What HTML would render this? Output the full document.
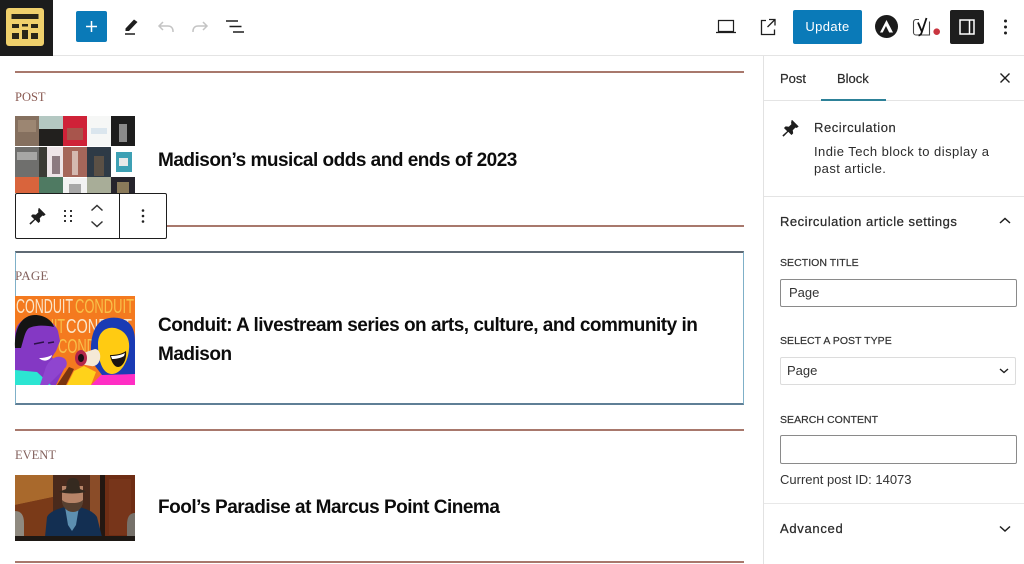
<!DOCTYPE html>
<html lang="en">
<head>
<meta charset="utf-8">
<title>Recirculation block editor</title>
<style>
html,body{margin:0;padding:0;background:#fff}
body{width:1024px;height:564px;position:relative;overflow:hidden;font-family:"Liberation Sans",sans-serif;color:#1e1e1e}
.a{position:absolute}
.t{position:absolute;white-space:nowrap}
.rule{position:absolute;left:15px;width:729px;height:2px;background:#a8786c}
.kick{position:absolute;left:15px;font:13px/16px "Liberation Serif",serif;color:#8a5a52;white-space:nowrap}
.title{position:absolute;left:158px;font:bold 19px/29px "Liberation Sans",sans-serif;letter-spacing:-.5px;color:#0c0c0c;white-space:nowrap}
.side{font-size:13px;line-height:17px;color:#2b2b2b}
.lab{position:absolute;left:780px;font-size:10.5px;line-height:13px;letter-spacing:.05px;color:#333;white-space:nowrap;-webkit-text-stroke:.2px #333}
.box{position:absolute;left:780px;width:235px;background:#fff;border:1px solid #8a8a8a;border-radius:2px}
svg{position:absolute;display:block;overflow:visible}
</style>
</head>
<body>

<!-- Top bar -->
<div class="a" style="left:0;top:0;width:1024px;height:55px;border-bottom:1px solid #e4e4e4;box-sizing:content-box"></div>
<div class="a" style="left:0;top:0;width:53px;height:56px;background:#1c1c1c"></div>
<svg style="left:6px;top:8px" width="38" height="38" viewBox="0 0 38 38">
  <rect width="38" height="38" rx="3" fill="#f0d06c"/>
  <rect x="5.500" y="6" width="27" height="5" fill="#2a2618"/>
  <rect x="6" y="16" width="7" height="4" fill="#2a2618"/>
  <rect x="16" y="16" width="6" height="2.500" fill="#2a2618"/>
  <rect x="25" y="16" width="7" height="4" fill="#2a2618"/>
  <rect x="6" y="25" width="7" height="6" fill="#2a2618"/>
  <rect x="16" y="22" width="6" height="9" fill="#2a2618"/>
  <rect x="25" y="25" width="7" height="6" fill="#2a2618"/>
</svg>

<div class="a" style="left:76px;top:11px;width:31px;height:31px;background:#0a7ab8;border-radius:2px"></div>
<svg style="left:76px;top:11px" width="31" height="31" viewBox="0 0 31 31"><path d="M15.500 10v11M10 15.500h11" stroke="#fff" stroke-width="1.500" fill="none"/></svg>

<svg style="left:122px;top:17px" width="20" height="20" viewBox="0 0 20 20"><path d="M3.500 11.500 12 2.500l3.500 2.500-8.500 9H3.500z" fill="#1e1e1e"/><path d="M3 17h10" stroke="#1e1e1e" stroke-width="1.500"/></svg>
<svg style="left:156px;top:17px" width="20" height="20" viewBox="0 0 20 20"><path d="M7 5 3 9l4 4M3 9h9c3 0 5 2 5 5v1" stroke="#c4c4c4" stroke-width="1.500" fill="none"/></svg>
<svg style="left:190px;top:17px" width="20" height="20" viewBox="0 0 20 20"><path d="M13 5l4 4-4 4M17 9H8c-3 0-5 2-5 5v1" stroke="#c4c4c4" stroke-width="1.500" fill="none"/></svg>
<svg style="left:224px;top:17px" width="22" height="20" viewBox="0 0 22 20"><path d="M2 4h12M5.500 9.500h12M9 15h11" stroke="#1e1e1e" stroke-width="1.600" fill="none"/></svg>

<svg style="left:716px;top:17px" width="20" height="20" viewBox="0 0 20 20"><path d="M2.500 3.500h15v11h-15zM0 15.500h20" stroke="#1e1e1e" stroke-width="1.200" fill="none"/></svg>
<svg style="left:758px;top:17px" width="20" height="20" viewBox="0 0 20 20"><path d="M8 3.500H3.500v14h13v-5M11 2.500h6v6M17 2.500l-7.500 7.500" stroke="#1e1e1e" stroke-width="1.300" fill="none"/></svg>

<div class="a" style="left:793px;top:10px;width:69px;height:34px;background:#0a7ab8;border-radius:2px;color:#fff;font-size:13px;line-height:34px;text-align:center;letter-spacing:.4px">Update</div>

<svg style="left:875px;top:15px" width="23" height="23" viewBox="0 0 23 23"><circle cx="11.500" cy="11.500" r="11.500" fill="#1b1b1b"/><path d="M11.500 5 18 17.500h-3.800L11 11l-3.300 6.500H5z" fill="#fff"/></svg>
<svg style="left:913px;top:17px" width="28" height="22" viewBox="0 0 28 22"><path d="M6 2.500H3a2.500 2.500 0 0 0-2.500 2.500v10.500A2.500 2.500 0 0 0 3 18h13.500V4.500" stroke="#444" stroke-width="1.100" fill="none"/><path d="M5 5.500l4 9.500M13.500 1 8.500 16c-.5 1.500-1.500 2.200-3 2.500" stroke="#111" stroke-width="1.800" fill="none"/><circle cx="23.700" cy="14.700" r="3.300" fill="#c9353f"/></svg>

<div class="a" style="left:950px;top:10px;width:34px;height:34px;background:#1e1e1e;border-radius:2px"></div>
<svg style="left:950px;top:10px" width="34" height="34" viewBox="0 0 34 34"><path d="M10 10h14v14H10zM19.500 10v14" stroke="#fff" stroke-width="1.500" fill="none"/></svg>
<svg style="left:1000px;top:17px" width="12" height="20" viewBox="0 0 12 20"><circle cx="5.500" cy="4" r="1.500" fill="#1e1e1e"/><circle cx="5.500" cy="10" r="1.500" fill="#1e1e1e"/><circle cx="5.500" cy="16" r="1.500" fill="#1e1e1e"/></svg>

<!-- Content -->
<div class="rule" style="top:71px"></div>
<div class="kick" style="top:89px;font-size:12.500px">POST</div>

<svg style="left:15px;top:116px" width="120" height="77" viewBox="0 0 120 77">
  <rect width="120" height="77" fill="#fff"/>
  <rect x="0" y="0" width="24" height="30" fill="#85705f"/>
  <rect x="3" y="4" width="18" height="12" fill="#9c8672"/>
  <rect x="24" y="0" width="24" height="13" fill="#b4c8c2"/>
  <rect x="24" y="13" width="24" height="17" fill="#22201e"/>
  <rect x="48" y="0" width="24" height="30" fill="#cf2238"/>
  <rect x="52" y="12" width="16" height="12" fill="#a8554c"/>
  <rect x="72" y="0" width="24" height="30" fill="#f6f7f6"/>
  <rect x="76" y="12" width="16" height="6" fill="#dbe6ee"/>
  <rect x="96" y="0" width="24" height="30" fill="#1d1d1d"/>
  <rect x="104" y="8" width="8" height="18" fill="#8a8a8a"/>
  <rect x="0" y="31" width="24" height="30" fill="#6f6f6d"/>
  <rect x="2" y="36" width="20" height="8" fill="#a7a7a5"/>
  <rect x="24" y="31" width="8" height="30" fill="#3b3b35"/>
  <rect x="32" y="31" width="16" height="30" fill="#eee5e8"/>
  <rect x="37" y="40" width="8" height="18" fill="#8c7a80"/>
  <rect x="48" y="31" width="24" height="30" fill="#a5665a"/>
  <rect x="57" y="35" width="6" height="24" fill="#d4b8b0"/>
  <rect x="72" y="31" width="24" height="30" fill="#2e3a46"/>
  <rect x="79" y="40" width="10" height="20" fill="#5b5045"/>
  <rect x="96" y="31" width="24" height="30" fill="#fff"/>
  <rect x="101" y="36" width="16" height="20" fill="#3da0b4"/>
  <rect x="104" y="42" width="9" height="8" fill="#e8e8e8"/>
  <rect x="0" y="61" width="24" height="16" fill="#d9643c"/>
  <rect x="24" y="61" width="24" height="16" fill="#4f7a62"/>
  <rect x="48" y="62" width="24" height="15" fill="#f2f2f2"/>
  <rect x="54" y="68" width="12" height="9" fill="#a8a8a8"/>
  <rect x="72" y="61" width="24" height="16" fill="#a8ad98"/>
  <rect x="96" y="61" width="24" height="16" fill="#26242c"/>
  <rect x="102" y="66" width="12" height="11" fill="#8a7a5a"/>
</svg>

<div class="title" style="top:146px">Madison’s musical odds and ends of 2023</div>

<div class="rule" style="top:225px"></div>

<!-- Block toolbar -->
<div class="a" style="left:15px;top:193px;width:150px;height:44px;background:#fff;border:1px solid #1e1e1e;border-radius:2px"></div>
<div class="a" style="left:119px;top:193px;width:1px;height:46px;background:#1e1e1e"></div>
<svg style="left:28px;top:206px" width="20" height="20" viewBox="0 0 20 20"><path d="M11 2.500l6 6-1.500 1-1.200-.5-3 3 .4 3.200-1.200 1.200-3.200-3.200L2.500 18l-.5-.5 4.800-4.300-3.200-3.200 1.200-1.200 3.200.4 3-3-.5-1.200z" fill="#1e1e1e" stroke="#1e1e1e" stroke-width=".9" stroke-linejoin="round"/></svg>
<svg style="left:60px;top:207px" width="16" height="18" viewBox="0 0 16 18"><g fill="#333"><rect x="4" y="3" width="2" height="2"/><rect x="10" y="3" width="2" height="2"/><rect x="4" y="8" width="2" height="2"/><rect x="10" y="8" width="2" height="2"/><rect x="4" y="13" width="2" height="2"/><rect x="10" y="13" width="2" height="2"/></g></svg>
<svg style="left:88px;top:202px" width="18" height="28" viewBox="0 0 18 28"><path d="M3.500 8.500 9 3.500l5.500 5M3.500 19.500 9 24.500l5.500-5" stroke="#333" stroke-width="1.500" fill="none"/></svg>
<svg style="left:137px;top:207px" width="12" height="18" viewBox="0 0 12 18"><circle cx="6" cy="3.500" r="1.300" fill="#222"/><circle cx="6" cy="9" r="1.300" fill="#222"/><circle cx="6" cy="14.500" r="1.300" fill="#222"/></svg>

<!-- Selected block -->
<div class="a" style="left:15px;top:251px;width:727px;height:150px;border:solid #5b7f90;border-width:2px 1px;border-left-color:#7fb0c8;border-right-color:#7fb0c8;border-top-color:#5f6a74;border-bottom-color:#5f7f96"></div>
<div class="kick" style="top:268px;letter-spacing:.2px;color:#84625e">PAGE</div>

<svg style="left:15px;top:296px" width="120" height="89" viewBox="0 0 120 89">
  <rect width="120" height="89" fill="#f47a1f"/>
  <g font-family="Liberation Sans, sans-serif">
    <text x="1" y="17" font-size="20" textLength="57" lengthAdjust="spacingAndGlyphs" fill="#fbe6c8">CONDUIT</text>
    <text x="60" y="17" font-size="20" textLength="59" lengthAdjust="spacingAndGlyphs" fill="#f8c04a">CONDUIT</text>
    <text x="30" y="37" font-size="20" textLength="20" lengthAdjust="spacingAndGlyphs" fill="#f8c04a">UIT</text>
    <text x="51" y="37" font-size="20" textLength="66" lengthAdjust="spacingAndGlyphs" fill="#fbe6c8">CONDUIT</text>
    <text x="43" y="57" font-size="20" textLength="38" lengthAdjust="spacingAndGlyphs" fill="#f8c04a">COND</text>
  </g>
  <path d="M0 40C0 28 8 21 20 21c11 0 20 6 23 14l2 10-4 10-4 6 3 6 5-2 4 8-8 16H0z" fill="#8438c4"/>
  <path d="M0 52C-1 30 8 19 20 19c9 0 17 5 19 12-8-2-19-2-25 1-4 3-5 10-8 20z" fill="#141414"/>
  <path d="M0 74l22 2 14 13H0z" fill="#2ce5d2"/>
  <path d="M30 74c2-8 10-15 16-13 5 1 7 5 5 10l-10 10-8 8h-8z" fill="#8f45cf"/>
  <path d="M19 48l10-2M33 47l6-1" stroke="#2c1248" stroke-width="1.500"/>
  <path d="M24 62c5 0 9-1 13-3-1 5-8 8-13 3z" fill="#fff"/>
  <path d="M52 89l7-14 10-5 12 6-5 13z" fill="#ffd21a"/>
  <path d="M42 89l12-18 5 2-8 16z" fill="#7a3410"/>
  <path d="M76 89l12-12 32 0v12z" fill="#ff2ec4"/>
  <path d="M77 66c-3-18 0-36 11-42 8-4 20-3 26 3 5 5 6 12 6 19v32l-33 1z" fill="#1a3bb4"/>
  <path d="M83 48c0-13 10-19 20-15 8 3 12 10 11 20-1 14-9 25-17 25-8 0-14-10-14-30z" fill="#ffcb12"/>
  <path d="M95 59c6 0 12-1 16-4 1 8-3 16-8 16-4 0-7-6-8-12z" fill="#1c1410"/>
  <path d="M96 60c5 0 10-1 14-3l-1 3c-3 2-8 3-12 3z" fill="#fff"/>
  <path d="M65 58l15-5c4 0 6 5 5 10s-5 8-9 7l-11-2z" fill="#f5e9d6"/>
  <ellipse cx="66" cy="62" rx="6" ry="8" fill="#b4274a"/>
  <ellipse cx="66" cy="62" rx="3" ry="4" fill="#1b1014"/>
</svg>

<div class="title" style="top:311px">Conduit: A livestream series on arts, culture, and community in<br>Madison</div>

<div class="rule" style="top:429px"></div>
<div class="kick" style="top:447px;font-size:12.500px;color:#84625e">EVENT</div>

<svg style="left:15px;top:475px" width="120" height="66" viewBox="0 0 120 66">
  <rect width="120" height="66" fill="#6d3417"/>
  <path d="M0 0h38v22L0 30z" fill="#a9692c"/>
  <path d="M0 30l38-8v44H0z" fill="#7a3a18"/>
  <rect x="38" y="0" width="48" height="66" fill="#4a2a1c"/>
  <rect x="75" y="0" width="10" height="66" fill="#8a4c28"/>
  <rect x="85" y="0" width="5" height="66" fill="#241711"/>
  <rect x="90" y="0" width="30" height="66" fill="#6e2d14"/>
  <rect x="94" y="4" width="22" height="56" fill="#77351a"/>
  <path d="M0 36c6 0 9 4 9 12v14H0z" fill="#8f8a80"/>
  <path d="M120 38c-6 0-8 5-8 12v12h8z" fill="#76716a"/>
  <path d="M30 62l2-20c2-5 10-8 18-10h14c8 2 15 5 18 10l5 20z" fill="#132f52"/>
  <path d="M50 32h14l-3 18-4 6-4-6z" fill="#5d8fb0"/>
  <path d="M47 11h21v14c0 7-5 11-10 11s-11-4-11-11z" fill="#b78468"/>
  <path d="M47 25c3 3 7 3 10 3s8 0 11-3c0 7-4 12-10 12s-11-5-11-12z" fill="#574030"/>
  <path d="M44 17c4-2 5-2 7-3l1-7c1-3 3-4 6-4s5 1 6 4l1 7c2 1 4 1 6 3-9 2-19 2-27 0z" fill="#352a20"/>
  <rect x="0" y="61" width="120" height="5" fill="#1d1814"/>
</svg>

<div class="title" style="top:493px">Fool’s Paradise at Marcus Point Cinema</div>
<div class="rule" style="top:561px"></div>

<!-- Sidebar -->
<div class="a" style="left:763px;top:56px;width:1px;height:508px;background:#e2e2e2"></div>
<div class="a" style="left:764px;top:100px;width:260px;height:1px;background:#e4e4e4"></div>
<div class="t" style="left:780px;top:70px;font-size:13px;line-height:17px;color:#2b2b2b;-webkit-text-stroke:.2px #2b2b2b">Post</div>
<div class="t" style="left:837px;top:70px;font-size:13px;line-height:17px;color:#2b2b2b;-webkit-text-stroke:.2px #2b2b2b">Block</div>
<div class="a" style="left:821px;top:99px;width:65px;height:2px;background:#2d8198"></div>
<svg style="left:999px;top:72px" width="12" height="12" viewBox="0 0 12 12"><path d="M1.500 1.500l9 9M10.500 1.500l-9 9" stroke="#1e1e1e" stroke-width="1.400" fill="none"/></svg>

<svg style="left:781px;top:118px" width="20" height="20" viewBox="0 0 20 20"><path d="M11 2.500l6 6-1.500 1-1.200-.5-3 3 .4 3.200-1.200 1.200-3.200-3.200L2.500 18l-.5-.5 4.800-4.300-3.200-3.200 1.200-1.200 3.200.4 3-3-.5-1.200z" fill="#1e1e1e" stroke="#1e1e1e" stroke-width=".9" stroke-linejoin="round"/></svg>
<div class="t side" style="left:814px;top:119px;letter-spacing:.55px;-webkit-text-stroke:.15px #2b2b2b">Recirculation</div>
<div class="t side" style="left:814px;top:143px;line-height:17px;letter-spacing:.45px">Indie Tech block to display a<br>past article.</div>
<div class="a" style="left:764px;top:196px;width:260px;height:1px;background:#e4e4e4"></div>

<div class="t" style="left:780px;top:213px;font-size:13px;line-height:17px;letter-spacing:.52px;color:#2b2b2b;-webkit-text-stroke:.25px #2b2b2b">Recirculation article settings</div>
<svg style="left:998px;top:215px" width="14" height="12" viewBox="0 0 14 12"><path d="M2 8l5-4.500L12 8" stroke="#1e1e1e" stroke-width="1.500" fill="none"/></svg>

<div class="lab" style="top:257px">SECTION TITLE</div>
<div class="box" style="top:279px;height:26px"></div>
<div class="t" style="left:789px;top:284px;font-size:13px;line-height:17px;color:#333">Page</div>

<div class="lab" style="top:335px">SELECT A POST TYPE</div>
<div class="box" style="top:357px;height:26px;border-color:#dcdcdc;width:234px"></div>
<div class="t" style="left:787px;top:362px;font-size:13px;line-height:17px;color:#333">Page</div>
<svg style="left:998px;top:366px" width="12" height="10" viewBox="0 0 12 10"><path d="M2 3l4 3.500L10 3" stroke="#1e1e1e" stroke-width="1.400" fill="none"/></svg>

<div class="lab" style="top:414px">SEARCH CONTENT</div>
<div class="box" style="top:435px;height:27px"></div>
<div class="t" style="left:780px;top:471px;font-size:13px;line-height:17px;color:#333">Current post ID: 14073</div>

<div class="a" style="left:764px;top:503px;width:260px;height:1px;background:#e8e8e8"></div>
<div class="t" style="left:780px;top:520px;font-size:13px;line-height:17px;letter-spacing:.7px;color:#2b2b2b;-webkit-text-stroke:.25px #2b2b2b">Advanced</div>
<svg style="left:998px;top:524px" width="14" height="10" viewBox="0 0 14 10"><path d="M2 2.500l5 4.500 5-4.500" stroke="#1e1e1e" stroke-width="1.500" fill="none"/></svg>

</body>
</html>
